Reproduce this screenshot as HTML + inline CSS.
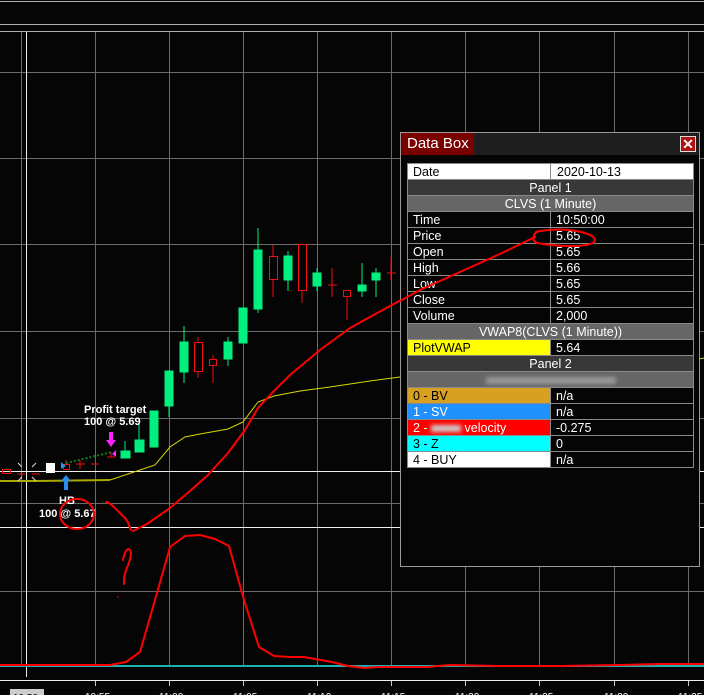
<!DOCTYPE html>
<html><head><meta charset="utf-8"><style>
*{margin:0;padding:0;box-sizing:border-box}
body{width:704px;height:695px;background:#050505;overflow:hidden;position:relative;font-family:"Liberation Sans",Arial,sans-serif}
svg{position:absolute;left:0;top:0}
#box{position:absolute;left:400px;top:132px;width:300px;height:435px;background:#050505;border:1px solid #9a9a9a}
#tb{position:absolute;left:0;top:0;width:298px;height:22px;background:#1e1e1e}
#tt{position:absolute;left:0;top:0;width:73px;height:22px;background:#7a0000;color:#fff;font-size:15px;line-height:22px;padding-left:6px}
#cl{position:absolute;left:279px;top:3px;width:16px;height:16px;background:#b01010;border:1px solid #ddd;color:#fff;font-weight:bold;font-size:14px;line-height:14px;text-align:center}
table{position:absolute;left:6px;top:30px;width:287px;border-collapse:collapse;font-size:12.5px}
td{height:16px;border:1px solid #8a8a8a;padding:0 5px;color:#fff;line-height:14px;white-space:nowrap}
td.l{width:143px}
.h td{text-align:center;background:#383838}
.h2 td{text-align:center;background:#666}
</style></head><body>
<svg width="704" height="695" viewBox="0 0 704 695">
<g stroke="#b0b0b0" stroke-width="1">
<line x1="0" y1="1.5" x2="704" y2="1.5"/>
<line x1="0" y1="24.5" x2="704" y2="24.5"/>
<line x1="0" y1="31.5" x2="704" y2="31.5"/>
</g>
<g stroke="#6a6a6a" stroke-width="1">
<line x1="21.5" y1="32" x2="21.5" y2="667"/>
<line x1="95.5" y1="32" x2="95.5" y2="667"/>
<line x1="169.5" y1="32" x2="169.5" y2="667"/>
<line x1="243.5" y1="32" x2="243.5" y2="667"/>
<line x1="317.5" y1="32" x2="317.5" y2="667"/>
<line x1="391.5" y1="32" x2="391.5" y2="667"/>
<line x1="465.5" y1="32" x2="465.5" y2="667"/>
<line x1="539.5" y1="32" x2="539.5" y2="667"/>
<line x1="614.5" y1="32" x2="614.5" y2="667"/>
<line x1="688.5" y1="32" x2="688.5" y2="667"/>
<line x1="0" y1="72.5" x2="704" y2="72.5"/>
<line x1="0" y1="158.5" x2="704" y2="158.5"/>
<line x1="0" y1="244.5" x2="704" y2="244.5"/>
<line x1="0" y1="331.5" x2="704" y2="331.5"/>
<line x1="0" y1="418.5" x2="704" y2="418.5"/>
<line x1="0" y1="503.5" x2="704" y2="503.5"/>
<line x1="0" y1="591.5" x2="704" y2="591.5"/>
</g>
<g stroke="#eee" stroke-width="1">
<line x1="26.5" y1="32" x2="26.5" y2="677"/>
<line x1="0" y1="471.5" x2="704" y2="471.5"/>
<line x1="0" y1="527.5" x2="704" y2="527.5"/>
<line x1="0" y1="680.5" x2="704" y2="680.5"/>
</g>
<g stroke="#ccc"><line x1="95.5" y1="681" x2="95.5" y2="686"/><line x1="169.5" y1="681" x2="169.5" y2="686"/><line x1="243.5" y1="681" x2="243.5" y2="686"/><line x1="317.5" y1="681" x2="317.5" y2="686"/><line x1="391.5" y1="681" x2="391.5" y2="686"/><line x1="465.5" y1="681" x2="465.5" y2="686"/><line x1="539.5" y1="681" x2="539.5" y2="686"/><line x1="614.5" y1="681" x2="614.5" y2="686"/><line x1="688.5" y1="681" x2="688.5" y2="686"/></g>
<rect x="10" y="689" width="34" height="10" fill="#ccc"/>
<g fill="#fff" font-size="10" font-family="Liberation Sans"><text x="13" y="701" fill="#000">10:50</text><text x="85" y="700">10:55</text><text x="159" y="700">11:00</text><text x="233" y="700">11:05</text><text x="307" y="700">11:10</text><text x="381" y="700">11:15</text><text x="455" y="700">11:20</text><text x="529" y="700">11:25</text><text x="604" y="700">11:30</text><text x="678" y="700">11:35</text></g>
<line x1="0" y1="666" x2="704" y2="666" stroke="#20b0b0" stroke-width="2"/>
<polyline fill="none" stroke="#a8a800" stroke-width="2" points="0,481 37,481 110,480"/>
<polyline fill="none" stroke="#d8d800" stroke-width="1" points="110,480 155,465 170,447 185,437 200,434 228,429 243,422 258,402 274,396 300,391 330,387 370,381 400,377"/>
<line x1="699" y1="359" x2="704" y2="358" stroke="#d8d800"/>
<g stroke="#00f080" fill="#00f080">
<line x1="125" y1="441" x2="125" y2="458"/><rect x="121" y="451" width="9" height="7"/>
<line x1="139" y1="424" x2="139" y2="452"/><rect x="135" y="440" width="9" height="12"/>
<rect x="150" y="411" width="8" height="36"/>
<line x1="169" y1="371" x2="169" y2="417"/><rect x="165" y="371" width="8" height="35"/>
<line x1="184" y1="326" x2="184" y2="383"/><rect x="180" y="342" width="8" height="30"/>
<line x1="228" y1="337" x2="228" y2="366"/><rect x="224" y="342" width="8" height="17"/>
<rect x="239" y="308" width="8" height="35"/>
<line x1="258" y1="228" x2="258" y2="313"/><rect x="254" y="250" width="8" height="59"/>
<line x1="288" y1="251" x2="288" y2="291"/><rect x="284" y="256" width="8" height="24"/>
<line x1="317" y1="268" x2="317" y2="291"/><rect x="313" y="273" width="8" height="13"/>
<line x1="362" y1="263" x2="362" y2="297"/><rect x="358" y="285" width="8" height="6"/>
<line x1="376" y1="268" x2="376" y2="297"/><rect x="372" y="273" width="8" height="7"/>
</g>
<g stroke="#f01010" fill="none">
<line x1="198" y1="337" x2="198" y2="378"/><rect x="194.5" y="342.5" width="8" height="29" fill="#050505"/>
<line x1="213" y1="355" x2="213" y2="383"/><rect x="209.5" y="359.5" width="7" height="6" fill="#050505"/>
<line x1="273" y1="245" x2="273" y2="297"/><rect x="269.5" y="256.5" width="8" height="23" fill="#050505"/>
<line x1="302" y1="244" x2="302" y2="303"/><rect x="298.5" y="244.5" width="8" height="46" fill="#050505"/>
<line x1="332" y1="268" x2="332" y2="297"/><line x1="328" y1="285" x2="337" y2="285"/>
<line x1="347" y1="290" x2="347" y2="320"/><rect x="343.5" y="290.5" width="7" height="6" fill="#050505"/>
<line x1="391" y1="257" x2="391" y2="280"/><line x1="387" y1="273" x2="396" y2="273"/>
<rect x="2.5" y="469.5" width="8" height="4"/><line x1="17" y1="474" x2="25" y2="474"/><line x1="32" y1="474" x2="40" y2="474"/>
<rect x="63.5" y="464.5" width="6" height="5"/><line x1="66" y1="460" x2="66" y2="464"/>
<line x1="76" y1="464" x2="85" y2="464"/><line x1="80" y1="460" x2="80" y2="469"/>
<line x1="91" y1="464" x2="99" y2="464"/>
<line x1="107" y1="457" x2="115" y2="457"/><line x1="111" y1="452" x2="111" y2="457"/>
</g>
<g stroke="#ddd"><line x1="18" y1="463" x2="22" y2="467"/><line x1="18" y1="481" x2="22" y2="477"/><line x1="32" y1="467" x2="36" y2="463"/><line x1="32" y1="477" x2="36" y2="481"/></g>
<rect x="46" y="463" width="9" height="10" fill="#fff"/>
<polygon points="61,462 66,466 61,469" fill="#2a8ef0"/>
<polygon points="66,475 71,481 68,481 68,490 64,490 64,481 61,481" fill="#2a8ef0"/>
<line x1="66" y1="463" x2="112" y2="452" stroke="#1a7a1a" stroke-width="2" stroke-dasharray="2,2"/>
<polygon points="109,432 113,432 113,440 116,440 111,447 106,440 109,440" fill="#ff20ff"/>
<polygon points="116,450 116,457 112,454" fill="#ff20ff"/>
<g fill="#fff" font-size="11" font-weight="bold" font-family="Liberation Sans">
<text x="84" y="413">Profit target</text><text x="84" y="425">100 @ 5.69</text>
<text x="59" y="504">HB</text><text x="39" y="517">100 @ 5.67</text>
</g>
<g fill="none" stroke="#f00" stroke-width="2" stroke-linecap="round" stroke-linejoin="round">
<polyline points="133,531 147,524 170,508 190,491 208,475 228,453 245,430 258,408 272,393 290,375 320,350 350,328 390,306 420,290 460,272 500,254 535,237"/>
<ellipse cx="77" cy="514" rx="17" ry="15"/>
<path d="M106,502 C112,503 118,512 125,518 C129,522 129,527 131,530"/>
<path d="M123,560 C125,549 130,545 131,554 C130,565 124,570 124,580 L124,584"/>
<polyline points="0,665 45,665 110,665 126,662 140,652 155,600 170,547 185,536 200,535 215,539 229,546 244,600 259,647 274,656 290,657 304,657 332,662 348,666 364,668 377,667 427,667 449,665 500,666 560,666 620,665 660,664 704,664"/>
</g>
<circle cx="118" cy="597" r="0.8" fill="#f00"/>
</svg>
<div id="box">
<div id="tb"><div id="tt">Data Box</div><div id="cl">✕</div></div>
<table>
<tr><td class="l" style="background:#fff;color:#000">Date</td><td style="background:#fff;color:#000;padding-left:6px">2020-10-13</td></tr>
<tr class="h"><td colspan="2">Panel 1</td></tr>
<tr class="h2"><td colspan="2">CLVS (1 Minute)</td></tr>
<tr><td class="l">Time</td><td>10:50:00</td></tr>
<tr><td class="l">Price</td><td>5.65</td></tr>
<tr><td class="l">Open</td><td>5.65</td></tr>
<tr><td class="l">High</td><td>5.66</td></tr>
<tr><td class="l">Low</td><td>5.65</td></tr>
<tr><td class="l">Close</td><td>5.65</td></tr>
<tr><td class="l">Volume</td><td>2,000</td></tr>
<tr class="h2"><td colspan="2">VWAP8(CLVS (1 Minute))</td></tr>
<tr><td class="l" style="background:#ffff00;color:#000">PlotVWAP</td><td>5.64</td></tr>
<tr class="h"><td colspan="2">Panel 2</td></tr>
<tr class="h2"><td colspan="2"><span style="display:inline-block;width:130px;height:7px;background:#999;filter:blur(2px)"></span></td></tr>
<tr><td class="l" style="background:#d8a020;color:#000">0 - BV</td><td>n/a</td></tr>
<tr><td class="l" style="background:#2090ff">1 - SV</td><td>n/a</td></tr>
<tr><td class="l" style="background:#ff0000">2 - <span style="display:inline-block;width:30px;height:7px;background:#ccc;filter:blur(2px)"></span> velocity</td><td>-0.275</td></tr>
<tr><td class="l" style="background:#00ffff;color:#000">3 - Z</td><td>0</td></tr>
<tr><td class="l" style="background:#fff;color:#000">4 - BUY</td><td>n/a</td></tr>
</table>
</div>
<svg width="704" height="695" style="pointer-events:none"><g fill="none" stroke="#f00" stroke-width="2" stroke-linecap="round"><polyline points="400,301 420,290 460,272 500,254 535,237"/><path d="M536,232 C560,226 595,232 595,240 C594,248 560,247 537,243 C532,241 532,235 538,231"/></g></svg>
</body></html>
